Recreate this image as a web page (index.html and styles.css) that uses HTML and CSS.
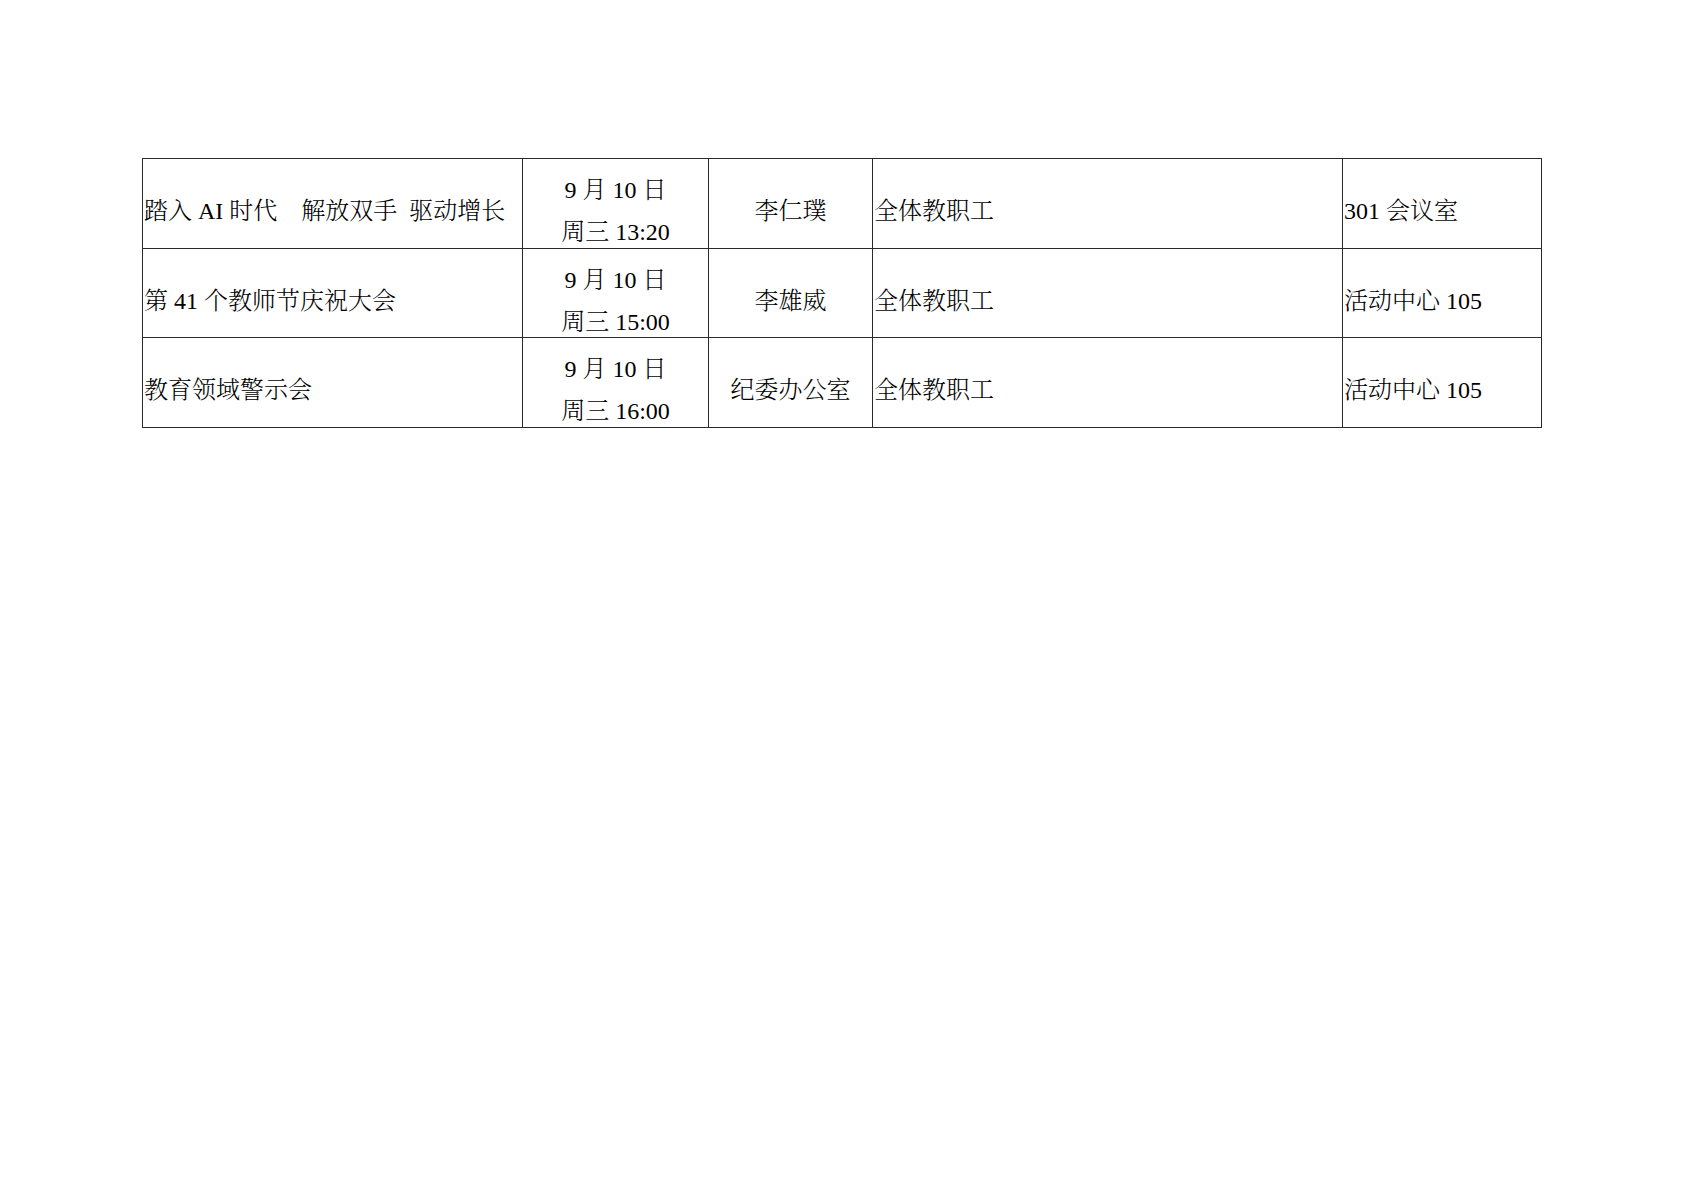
FILE: index.html
```html
<!DOCTYPE html>
<html lang="zh-CN">
<head>
<meta charset="utf-8">
<title>会议安排</title>
<link rel="stylesheet" href="styles.css">
</head>
<body>
<div class="page">
  <div class="sheet">
    <div class="cell left">踏入 AI 时代&nbsp;&nbsp;&nbsp;&nbsp;解放双手&nbsp;&nbsp;驱动增长</div>
    <div class="cell center"><div class="two"><span>9 月 10 日</span><span>周三 13:20</span></div></div>
    <div class="cell center">李仁璞</div>
    <div class="cell left">全体教职工</div>
    <div class="cell left">301 会议室</div>

    <div class="cell left">第 41 个教师节庆祝大会</div>
    <div class="cell center"><div class="two"><span>9 月 10 日</span><span>周三 15:00</span></div></div>
    <div class="cell center">李雄威</div>
    <div class="cell left">全体教职工</div>
    <div class="cell left">活动中心 105</div>

    <div class="cell left">教育领域警示会</div>
    <div class="cell center"><div class="two"><span>9 月 10 日</span><span>周三 16:00</span></div></div>
    <div class="cell center">纪委办公室</div>
    <div class="cell left">全体教职工</div>
    <div class="cell left">活动中心 105</div>
  </div>
</div>
</body>
</html>
```

FILE: styles.css
```css
html, body {
  margin: 0;
  padding: 0;
  background: #ffffff;
}

body {
  font-family: "Liberation Serif", "Noto Serif CJK SC", "Noto Sans CJK SC", serif;
  font-size: 24px;
  font-weight: 300;
  color: #000000;
}

.page {
  padding: 158px 0 0 142px;
}

.sheet {
  display: grid;
  grid-template-columns: 380px 186px 164px 470px 199px;
  grid-auto-rows: 89.5px;
  width: 1399px;
  border-left: 1px solid #2a2a2a;
  border-top: 1px solid #2a2a2a;
}

.cell {
  box-sizing: border-box;
  border-right: 1px solid #2a2a2a;
  border-bottom: 1px solid #2a2a2a;
  padding: 19px 1px 3.5px 1px;
  display: flex;
  align-items: center;
  line-height: 24px;
  white-space: nowrap;
}

.left {
  justify-content: flex-start;
}

.center {
  justify-content: center;
}

.two {
  display: flex;
  flex-direction: column;
  align-items: center;
  gap: 18px;
}
```
